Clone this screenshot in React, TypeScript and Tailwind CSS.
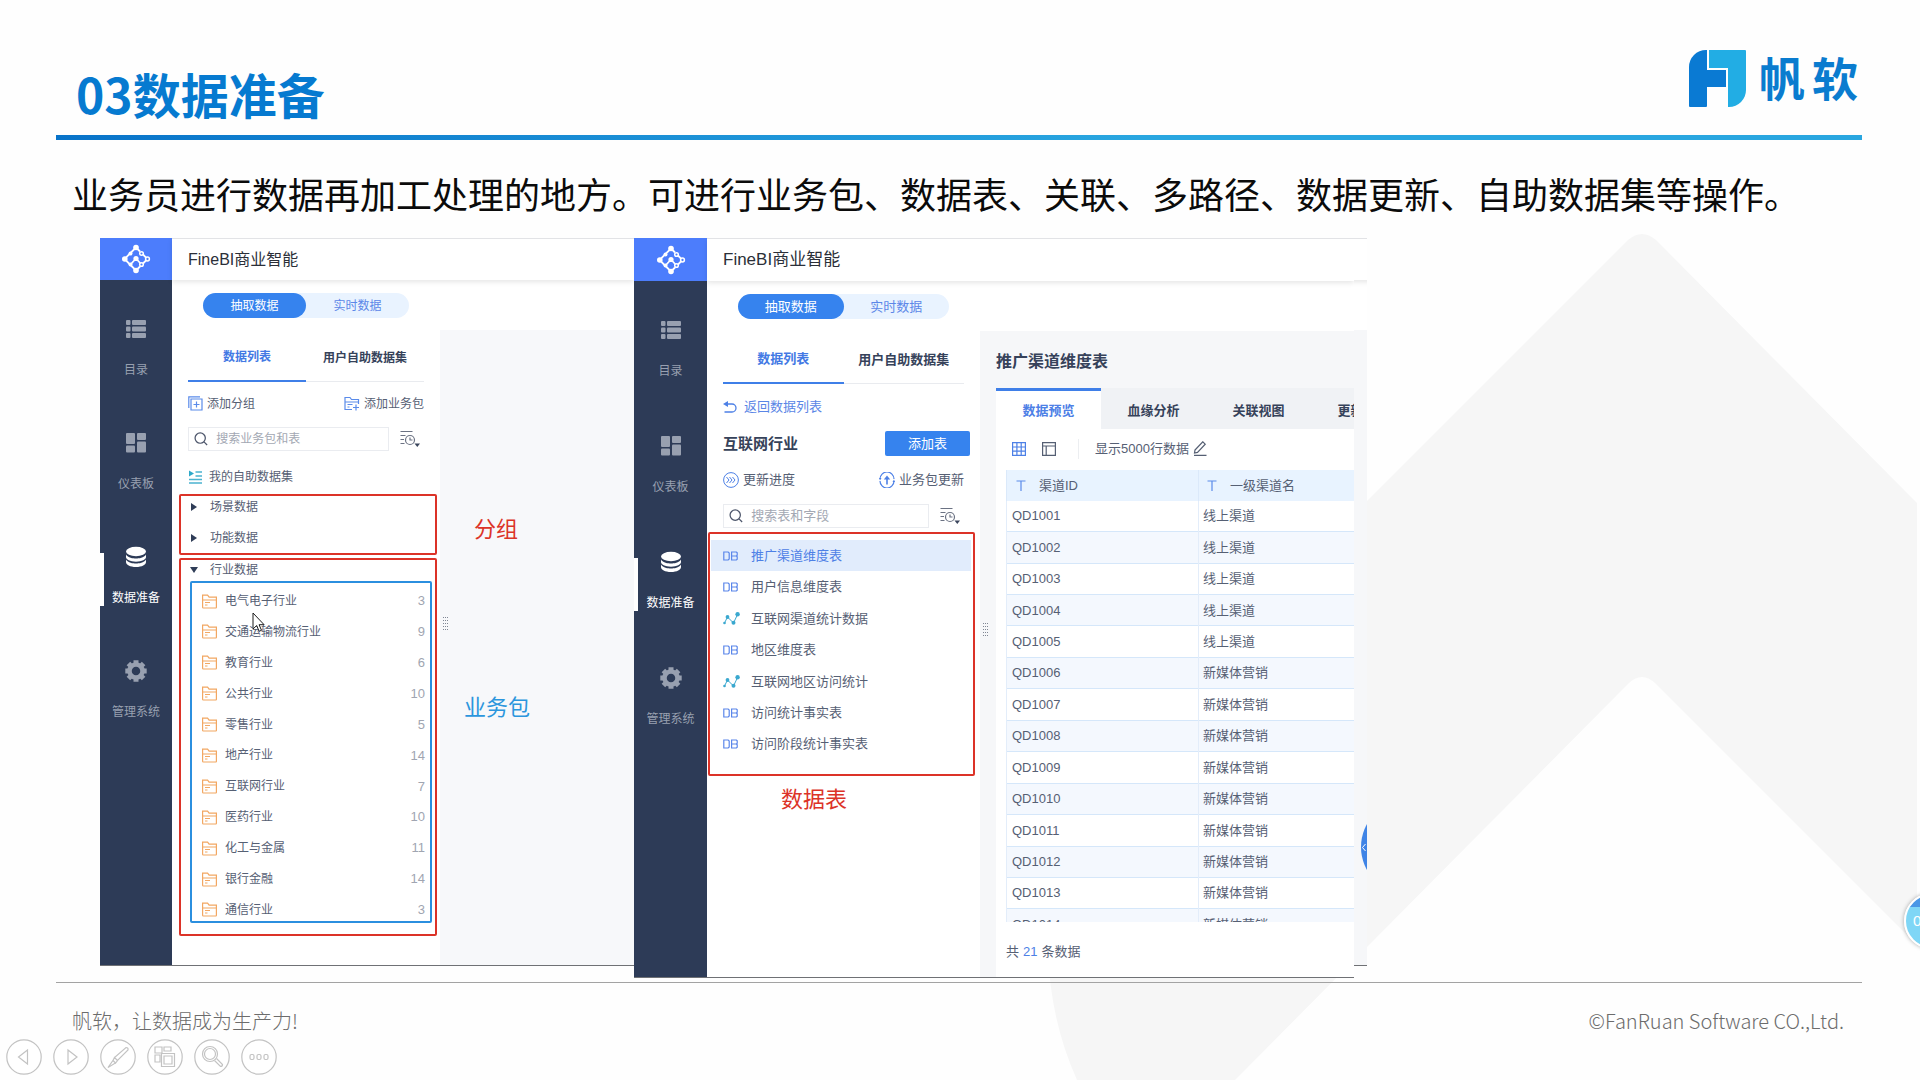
import React, { useState } from 'react';
import { clsx } from 'clsx';

const MENU = ['目录', '仪表板', '数据准备', '管理系统'];

const INDUSTRIES = [
  { name: '电气电子行业', count: 3 },
  { name: '交通运输物流行业', count: 9 },
  { name: '教育行业', count: 6 },
  { name: '公共行业', count: 10 },
  { name: '零售行业', count: 5 },
  { name: '地产行业', count: 14 },
  { name: '互联网行业', count: 7 },
  { name: '医药行业', count: 10 },
  { name: '化工与金属', count: 11 },
  { name: '银行金融', count: 14 },
  { name: '通信行业', count: 3 },
];

const TABLES = [
  { name: '推广渠道维度表', kind: 'db' },
  { name: '用户信息维度表', kind: 'db' },
  { name: '互联网渠道统计数据', kind: 'chart' },
  { name: '地区维度表', kind: 'db' },
  { name: '互联网地区访问统计', kind: 'chart' },
  { name: '访问统计事实表', kind: 'db' },
  { name: '访问阶段统计事实表', kind: 'db' },
];

const CHANNELS = Array.from({ length: 14 }, (_, i) => ({
  id: `QD${1001 + i}`,
  level: i < 5 ? '线上渠道' : '新媒体营销',
}));

const PREVIEW_TABS = ['数据预览', '血缘分析', '关联视图', '更新信息'];

/* ---------- icons ---------- */

const BrandMark = () => (
  <svg width="58" height="58" viewBox="0 0 58 58" aria-hidden="true">
    <path fill="#0a7ad3" d="M0 17A17 17 0 0 1 17 0h1v20h19v17H18v19a1 1 0 0 1-1 1H1a1 1 0 0 1-1-1z" />
    <path fill="#22ade4" d="M20 0h36a1 1 0 0 1 1 1v39a17 17 0 0 1-17 17h-1V18H20z" />
  </svg>
);

const FineLogo = () => (
  <svg width="30" height="30" viewBox="0 0 30 30" fill="none" stroke="#fff" strokeWidth="1.8" aria-hidden="true">
    <path d="M15 3.500 3.500 15 15 26.500M15 3.500l4 4M20.500 9l6 6-5.500 5.500M15 26.500l4-4M9.500 20.500l5.500-6 5 5.500" />
    <g fill="#fff" stroke="none">
      <circle cx="15" cy="3.500" r="2.800" />
      <circle cx="3.800" cy="15" r="2.800" />
      <circle cx="15" cy="26.500" r="2.800" />
      <circle cx="15" cy="14.500" r="2.600" />
      <circle cx="9.500" cy="9.500" r="2" />
      <circle cx="9.500" cy="20.500" r="2" />
    </g>
    <g fill="#4c7dfc" strokeWidth="1.500">
      <circle cx="20.500" cy="9.500" r="1.800" />
      <circle cx="26.500" cy="15" r="1.900" />
      <circle cx="20.500" cy="20.500" r="1.800" />
    </g>
  </svg>
);

const MenuIcon = ({ index }: { index: number }) => (
  <svg width="22" height="22" viewBox="0 0 22 22" fill="currentColor" aria-hidden="true">
    {index === 0 && (
      <g>
        <rect x="1" y="2" width="4.500" height="5" rx="1" />
        <rect x="7" y="2" width="14" height="5" rx="1" />
        <rect x="1" y="8.500" width="4.500" height="5" rx="1" />
        <rect x="7" y="8.500" width="14" height="5" rx="1" />
        <rect x="1" y="15" width="4.500" height="5" rx="1" />
        <rect x="7" y="15" width="14" height="5" rx="1" />
      </g>
    )}
    {index === 1 && (
      <g>
        <rect x="1" y="1" width="9" height="11" rx="1" />
        <rect x="12" y="1" width="9" height="7" rx="1" />
        <rect x="1" y="13.500" width="9" height="7" rx="1" />
        <rect x="12" y="9.500" width="9" height="11" rx="1" />
      </g>
    )}
    {index === 2 && (
      <g>
        <ellipse cx="11" cy="5.500" rx="10" ry="4.700" />
        <path d="M1 8.500c2 3.500 7 4 10 4s8-.5 10-4v2.500c0 2.500-4 4.700-10 4.700S1 13.500 1 11z" />
        <path d="M1 13.500c2 3.500 7 4 10 4s8-.5 10-4V16c0 2.800-4 5-10 5S1 18.800 1 16z" />
      </g>
    )}
    {index === 3 && (
      <g>
        <circle cx="11" cy="11" r="6.500" fill="none" stroke="currentColor" strokeWidth="4.500" />
        <path
          fill="none"
          stroke="currentColor"
          strokeWidth="5"
          d="M11 .3V3M11 19v2.700M.3 11H3M19 11h2.700M3.400 3.400l2 2M16.600 16.600l2 2M3.400 18.600l2-2M16.600 5.400l2-2"
        />
      </g>
    )}
  </svg>
);

const FolderIcon = () => (
  <svg width="15" height="15" viewBox="0 0 15 15" fill="none" stroke="#f2a762" strokeWidth="1.200" aria-hidden="true">
    <path d="M.6 13.200v-12h5l1.500 2h7.300v10a.8.8 0 0 1-.8.800H1.400a.8.800 0 0 1-.8-.8zM.6 6h13.800M3 8.500h5M3 11h2.500" />
  </svg>
);

const AddGroupIcon = () => (
  <svg width="15" height="15" viewBox="0 0 15 15" fill="none" stroke="#5a8bea" strokeWidth="1.200" aria-hidden="true">
    <path d="M.8 12V.8H12M3 3h11v11H3zM8.500 5.500v6M5.500 8.500h6" />
  </svg>
);

const AddPackIcon = () => (
  <svg width="16" height="15" viewBox="0 0 16 15" fill="none" stroke="#5a8bea" strokeWidth="1.200" aria-hidden="true">
    <path d="M8 13.500H1v-12h5l1.500 2h7V8M1 6h13M3.500 8.500h5M3.500 11h2M12 8.500v6M9 11.500h6" />
  </svg>
);

const SearchIcon = () => (
  <svg width="16" height="16" viewBox="0 0 16 16" fill="none" stroke="#4d566b" strokeWidth="1.400" aria-hidden="true">
    <circle cx="7" cy="7" r="5.800" />
    <path d="m11.300 11.300 3.500 3.500" />
  </svg>
);

const RecentIcon = () => (
  <svg width="21" height="18" viewBox="0 0 21 18" fill="none" stroke="#6b7283" strokeWidth="1.200" aria-hidden="true">
    <path d="M.5 1.500h12M.5 5.500h5M.5 9.500h3.500M.5 13.500h4" />
    <circle cx="10" cy="10" r="4.500" />
    <path d="M10 7.500V10h2.500" />
    <path d="M14.500 13.500h5.500L17.300 17z" fill="#3a455c" stroke="none" />
  </svg>
);

const SelfDataIcon = () => (
  <svg width="15" height="14" viewBox="0 0 15 14" fill="none" stroke="#4bb3cf" strokeWidth="1.300" aria-hidden="true">
    <path d="M7.500 2H14M7.500 6H14M1 9.500h13M1 13h13" />
    <path d="M1 .5 6 3.500 1 6.500z" fill="#2ea9c9" stroke="none" />
  </svg>
);

const Triangle = ({ open }: { open?: boolean }) => (
  <svg width="8" height="8" viewBox="0 0 8 8" fill="#2f3d57" aria-hidden="true">
    {open ? <path d="M0 1h8L4 7z" /> : <path d="M1 0v8l6-4z" />}
  </svg>
);

const DbIcon = () => (
  <svg width="15" height="10" viewBox="0 0 15 10" fill="none" stroke="#5a86ea" strokeWidth="1.200" aria-hidden="true">
    <path d="M.8 1h4.400l1 1v6l-1 1H.8zM8.600 5V1h4.800l.8.800v2.400l-.8.800h-4.800v4h4.800l.8-.8V5.800l-.8-.8" />
  </svg>
);

const ChartIcon = () => (
  <svg width="17" height="13" viewBox="0 0 17 13" fill="#3aa8cf" aria-hidden="true">
    <path d="m1.500 11 3-6 6 6 4-8.500" fill="none" stroke="#3aa8cf" />
    <circle cx="1.500" cy="11" r="1.300" />
    <circle cx="4.500" cy="5" r="1.900" />
    <circle cx="10.500" cy="10.800" r="2" />
    <circle cx="14.600" cy="2.300" r="2.200" />
  </svg>
);

const BackIcon = () => (
  <svg width="14" height="12" viewBox="0 0 14 12" fill="none" stroke="#4d80e6" strokeWidth="1.300" aria-hidden="true">
    <path d="M2 3h7a4 4 0 0 1 0 8H1.500" />
    <path d="M5 0v6L0 3z" fill="#4d80e6" stroke="none" />
  </svg>
);

const ProgressIcon = () => (
  <svg width="16" height="16" viewBox="0 0 16 16" fill="none" stroke="#4d80e6" aria-hidden="true">
    <circle cx="8" cy="8" r="7.400" />
    <path d="m3.500 5 2.500 3-2.500 3M6.500 5 9 8l-2.500 3M9.500 5 12 8l-2.500 3" />
  </svg>
);

const UpdateIcon = () => (
  <svg width="16" height="16" viewBox="0 0 16 16" fill="none" stroke="#4d80e6" aria-hidden="true">
    <path d="M1 7a7 7 0 0 1 14 0M15 9A7 7 0 0 1 1 9" strokeWidth="1.200" />
    <path d="M0 6h2.500L1 8.500zM16 10h-2.500L15 7.500z" fill="#4d80e6" stroke="none" />
    <path d="M8 12.500V6" strokeWidth="1.600" />
    <path d="m4.800 7.500 3.200-4 3.200 4z" fill="#4d80e6" stroke="none" />
  </svg>
);

const GridIcon = () => (
  <svg width="14" height="14" viewBox="0 0 14 14" fill="none" stroke="#4d80e6" strokeWidth="1.200" aria-hidden="true">
    <path d="M.6.6h12.800v12.800H.6zM.6 5h12.800M.6 9.200h12.800M4.900.6v12.800M9.200.6v12.800" />
  </svg>
);

const LayoutIcon = () => (
  <svg width="14" height="14" viewBox="0 0 14 14" fill="none" stroke="#555f73" strokeWidth="1.200" aria-hidden="true">
    <path d="M.6.6h12.800v12.800H.6zM.6 4h12.800M4.200 4v9.400" />
  </svg>
);

const PencilIcon = () => (
  <svg width="14" height="15" viewBox="0 0 14 15" fill="none" stroke="#555f73" strokeWidth="1.200" aria-hidden="true">
    <path d="m2 9 7.800-8.200 2.400 2.400-7.700 8.200-3 .6zM1 14.400h12.500" />
  </svg>
);

const TextTypeIcon = () => (
  <svg width="10" height="11" viewBox="0 0 10 11" fill="none" stroke="#5a8bea" strokeWidth="1.200" aria-hidden="true">
    <path d="M.5 1h9M5 1v10" />
  </svg>
);

const Grip = () => (
  <svg width="5" height="14" viewBox="0 0 5 14" fill="#7f8693" aria-hidden="true">
    {[0, 3, 6, 9, 12].map((y) => (
      <g key={y}>
        <rect x="0" y={y} width="1" height="1" />
        <rect x="2" y={y} width="1" height="1" />
        <rect x="4" y={y} width="1" height="1" />
      </g>
    ))}
  </svg>
);

const Backdrop = () => (
  <svg
    className="absolute inset-0 h-full w-full"
    viewBox="0 0 1920 1080"
    preserveAspectRatio="none"
    fill="#f6f6f6"
    aria-hidden="true"
  >
    <path d="M1628 240q14-12 28 0l261 263v442l-261-261q-14-14-28 0l-393 396h-158q-27-60-29-130V820z" />
  </svg>
);

/* ---------- shared parts ---------- */

const Sidebar = ({ wide }: { wide?: boolean }) => (
  <nav className={clsx('flex shrink-0 flex-col bg-[#2d3b57]', wide ? 'w-[73px]' : 'w-[72px]')}>
    <div className={clsx('flex items-center justify-center bg-[#4c7dfc]', wide ? 'h-[43px]' : 'h-[42px]')}>
      <FineLogo />
    </div>
    <ul className={clsx('flex flex-col pt-[38px]', wide ? 'gap-14' : 'gap-[54px]')}>
      {MENU.map((label, i) => (
        <li key={label} className="relative">
          {i === 2 && <span className="absolute top-[7px] left-0 h-[53px] w-1 bg-white" />}
          <button
            className={clsx(
              'flex w-full flex-col items-center gap-[22px] text-[12px] leading-4',
              i === 2 ? 'text-white' : 'text-[#98a0b0]'
            )}
          >
            <MenuIcon index={i} />
            {label}
          </button>
        </li>
      ))}
    </ul>
  </nav>
);

const TitleBar = ({ wide }: { wide?: boolean }) => (
  <header
    className={clsx(
      'z-10 flex shrink-0 items-center border-t border-[#e2e3e6] bg-white pl-4 text-[#2b2f38] shadow-[0_2px_5px_rgba(0,0,0,0.10)]',
      wide ? 'h-[43px] text-[17px]' : 'h-[42px] text-[16px]'
    )}
  >
    FineBI商业智能
  </header>
);

const ModeSwitch = () => {
  const [mode, setMode] = useState('抽取数据');
  return (
    <div className="mx-[31px] mt-[13px] flex h-[25px] shrink-0 rounded-full bg-[#e9f3ff]">
      {['抽取数据', '实时数据'].map((m) => (
        <button
          key={m}
          onClick={() => setMode(m)}
          className={clsx('flex-1 rounded-full', m === mode ? 'bg-[#3683ee] text-white' : 'text-[#5c87e8]')}
        >
          {m}
        </button>
      ))}
    </div>
  );
};

const ListTabs = ({ wide }: { wide?: boolean }) => (
  <div className={clsx('mx-4 flex h-[50px] shrink-0 font-bold', wide ? 'mt-[15px]' : 'mt-[14px]')}>
    <button className="flex-1 border-b-2 border-[#3f7fe8] pt-[2px] text-[#4379e4]">数据列表</button>
    <button className="flex-1 border-b border-[#e9ebef] pt-[2px] text-[#36425a]">用户自助数据集</button>
  </div>
);

const SearchRow = ({ placeholder }: { placeholder: string }) => (
  <div className="mx-4 flex h-6 shrink-0 items-center gap-[11px]">
    <label className="flex h-6 min-w-0 flex-1 items-center gap-2 border border-[#eaecf0] pl-[5px]">
      <SearchIcon />
      <input
        type="text"
        aria-label={placeholder}
        placeholder={placeholder}
        className="w-full min-w-0 outline-none placeholder:text-[#a3a8b3]"
      />
    </label>
    <button aria-label="最近使用" className="mr-[3px]">
      <RecentIcon />
    </button>
  </div>
);

/* ---------- left screen ---------- */

const PackagePanel = () => (
  <div className="flex h-[728px] min-w-0 flex-[534] overflow-hidden border-b border-[#6f7175] bg-white text-[12px] text-[#566074]">
    <Sidebar />
    <div className="flex min-w-0 flex-1 flex-col">
      <TitleBar />
      <div className="flex min-h-0 flex-1">
        <section className="flex w-[268px] shrink-0 flex-col">
          <ModeSwitch />
          <ListTabs />
          <div className="mx-4 flex h-[45px] shrink-0 items-center justify-between pb-[2px]">
            <button className="flex items-center gap-1">
              <AddGroupIcon />
              添加分组
            </button>
            <button className="flex items-center gap-1">
              <AddPackIcon />
              添加业务包
            </button>
          </div>
          <SearchRow placeholder="搜索业务包和表" />
          <a href="#self" className="mx-4 mt-2 flex h-[35px] shrink-0 items-center gap-[6px]">
            <SelfDataIcon />
            我的自助数据集
          </a>

          <div className="mr-[3px] ml-[7px] flex h-[61px] shrink-0 flex-col gap-[9px] rounded-[2px] border-2 border-[#dc3328]">
            {['场景数据', '功能数据'].map((g) => (
              <button key={g} className="flex h-[22px] items-center gap-3 pl-[9px]">
                <Triangle />
                {g}
              </button>
            ))}
          </div>

          <div className="mt-[3px] mr-[3px] ml-[7px] flex shrink-0 flex-col rounded-[2px] border-2 border-[#dc3328] pb-[11px]">
            <button className="mb-[2px] flex h-[19px] items-center gap-3 pl-[9px]">
              <Triangle open />
              行业数据
            </button>
            <ul className="relative mr-[3px] ml-[9px] flex h-[342px] flex-col justify-between rounded-[2px] border-2 border-[#2b8fdf] pt-[7px]">
              {INDUSTRIES.map((item) => (
                <li key={item.name} className="flex h-[22px] items-center gap-2 pr-[5px] pl-[10px]">
                  <FolderIcon />
                  <span className="flex-1">{item.name}</span>
                  <span className="text-[13px] text-[#a0a5b1]">{item.count}</span>
                </li>
              ))}
              <svg
                className="absolute top-[29px] left-[60px]"
                width="14"
                height="21"
                viewBox="0 0 14 21"
                fill="#fff"
                stroke="#1c1c1c"
                aria-hidden="true"
              >
                <path d="M1 1v16l3.700-3.500 2.400 5.800 2.400-1-2.400-5.600h5z" />
              </svg>
            </ul>
          </div>
        </section>

        <div className="mt-[50px] flex min-w-0 flex-1 bg-[#f7f8fa]">
          <div className="pt-[287px] pl-[3px]">
            <Grip />
          </div>
          <div className="flex flex-col gap-[146px] pt-[184px] pl-4 text-[22px] leading-8">
            <span className="pl-[10px] text-[#dc3328]">分组</span>
            <span className="text-[#2b96dd]">业务包</span>
          </div>
        </div>
      </div>
    </div>
  </div>
);

/* ---------- right screen ---------- */

const TablePanel = () => {
  const [selected, setSelected] = useState('推广渠道维度表');

  return (
    <div className="flex h-[740px] min-w-0 flex-[720] overflow-hidden border-b border-[#6f7175] bg-white text-[13px] text-[#566074]">
      <Sidebar wide />
      <div className="flex min-w-0 flex-1 flex-col">
        <TitleBar wide />
        <div className="flex min-h-0 flex-1">
          <section className="flex w-[273px] shrink-0 flex-col">
            <ModeSwitch />
            <ListTabs wide />
            <a href="#back" className="mx-4 flex h-[47px] shrink-0 items-center gap-[7px] pb-[2px] text-[#5a86e6]">
              <BackIcon />
              返回数据列表
            </a>
            <div className="mr-[10px] ml-4 flex h-[25px] shrink-0 items-center justify-between">
              <h2 className="pt-[2px] text-[15px] font-bold text-[#36425a]">互联网行业</h2>
              <button className="h-[25px] w-[85px] rounded-[2px] bg-[#3683ee] text-white">添加表</button>
            </div>
            <div className="mx-4 flex h-[48px] shrink-0 items-center justify-between">
              <button className="flex items-center gap-1">
                <ProgressIcon />
                更新进度
              </button>
              <button className="flex items-center gap-1">
                <UpdateIcon />
                业务包更新
              </button>
            </div>
            <SearchRow placeholder="搜索表和字段" />

            <div className="mt-1 mr-[5px] ml-[1px] h-[244px] shrink-0 rounded-[2px] border-2 border-[#dc3328] pt-[6px]">
              <ul className="flex h-[220px] flex-col pr-[2px] pl-[1px]">
                {TABLES.map((t) => (
                  <li key={t.name} className="flex flex-1">
                    <button
                      onClick={() => setSelected(t.name)}
                      className={clsx(
                        'flex flex-1 items-center pl-3 text-left',
                        t.name === selected && 'bg-[#e1ecfc] text-[#4d80e6]'
                      )}
                    >
                      <span className="w-7">{t.kind === 'db' ? <DbIcon /> : <ChartIcon />}</span>
                      {t.name}
                    </button>
                  </li>
                ))}
              </ul>
            </div>
            <p className="mt-2 pl-[74px] text-[22px] leading-8 text-[#dc3328]">数据表</p>
          </section>

          <div className="mt-[50px] flex min-w-0 flex-1 bg-[#f6f7f9]">
            <div className="w-4 shrink-0 pt-[292px] pl-[3px]">
              <Grip />
            </div>
            <section className="flex min-w-0 flex-1 flex-col">
              <h2 className="flex h-[57px] shrink-0 items-center pt-1 text-[16px] font-bold text-[#36425a]">
                推广渠道维度表
              </h2>
              <div className="flex h-[41px] shrink-0 overflow-hidden bg-[#f0f2f5] font-bold text-[#36425a]">
                {PREVIEW_TABS.map((tab, i) => (
                  <button
                    key={tab}
                    className={clsx(
                      'w-[105px] shrink-0 border-t-3 pt-[2px]',
                      i === 0 ? 'border-[#3f7fe8] bg-white text-[#4d80e6]' : 'border-transparent'
                    )}
                  >
                    {tab}
                  </button>
                ))}
              </div>
              <div className="flex h-[41px] shrink-0 items-center bg-white pb-[2px] pl-4">
                <button aria-label="表格" className="mr-4">
                  <GridIcon />
                </button>
                <button aria-label="结构" className="mr-[22px]">
                  <LayoutIcon />
                </button>
                <span className="mr-4 h-5 w-px bg-[#eceef1]" />
                <span className="mr-1">显示5000行数据</span>
                <button aria-label="编辑">
                  <PencilIcon />
                </button>
              </div>
              <div className="h-[452px] shrink-0 overflow-hidden bg-white pl-[10px]">
                <table className="h-[471px] w-full table-fixed border-collapse text-left">
                  <thead>
                    <tr className="h-[31px] bg-[#e8f3ff]">
                      <th className="w-[192px] border-x border-[#dbe9fa] p-0 pl-[9px] font-normal">
                        <span className="flex items-center gap-[13px]">
                          <TextTypeIcon />
                          渠道ID
                        </span>
                      </th>
                      <th className="p-0 pl-2 font-normal">
                        <span className="flex items-center gap-[13px]">
                          <TextTypeIcon />
                          一级渠道名
                        </span>
                      </th>
                    </tr>
                  </thead>
                  <tbody>
                    {CHANNELS.map((c) => (
                      <tr key={c.id} className="border-b border-[#d5e7fa] even:bg-[#f4f8fe]">
                        <td className="border-x border-[#e3edfa] p-0 pl-[5px]">{c.id}</td>
                        <td className="p-0 pl-1">{c.level}</td>
                      </tr>
                    ))}
                  </tbody>
                </table>
              </div>
              <div className="flex flex-1 items-center gap-1 bg-white pt-[4px] pl-[10px]">
                共 <span className="text-[#4d80e6]">21</span> 条数据
              </div>
            </section>
          </div>
        </div>
      </div>
    </div>
  );
};

const ScreenEdge = () => (
  <div className="flex h-[728px] w-[13px] shrink-0 flex-col overflow-hidden border-b border-[#6f7175] bg-white">
    <div className="z-10 -mx-2 h-[42px] shrink-0 border-t border-[#e2e3e6] bg-white shadow-[0_2px_5px_rgba(0,0,0,0.10)]" />
    <div className="relative mt-[50px] flex-1 overflow-hidden bg-[#f6f7f9]">
      <svg className="absolute top-[484px] left-[7px]" width="60" height="66" viewBox="0 0 60 66" aria-hidden="true">
        <circle cx="47" cy="33" r="47" fill="#3f84e6" />
        <path d="m4.500 30-3 3.500 3 3.500" fill="none" stroke="#fff" />
      </svg>
    </div>
  </div>
);

/* ---------- slide controls ---------- */

const CONTROLS = [
  { label: '上一页', icon: <path d="M21.500 11v14l-9-7z" /> },
  { label: '下一页', icon: <path d="M15 11v14l9-7z" /> },
  {
    label: '画笔',
    icon: <path d="M26 8.500q2.500 0 2 2.500L17.500 21.500l-3-3zM14.500 18.500l3 3-2 2.500-2.500-2.500zM13 21.500l2.500 2.500L8 28.500z" />,
  },
  {
    label: '全部幻灯片',
    icon: <path d="M8 8h7v6H8zM17 8h7v4h-7zM8 16h5v7H8zM14.500 14.500h13v13h-13zM17 17h8v8h-8z" />,
  },
  {
    label: '缩放',
    icon: (
      <g>
        <circle cx="16" cy="15" r="7.500" />
        <circle cx="16" cy="15" r="5.500" />
        <path d="m20.500 21.500 6 6q2 0 2-2l-6-6" />
      </g>
    ),
  },
  {
    label: '更多',
    icon: (
      <g>
        <rect x="9" y="15.500" width="4" height="5" rx="1.500" />
        <rect x="16" y="15.500" width="4" height="5" rx="1.500" />
        <rect x="23" y="15.500" width="4" height="5" rx="1.500" />
      </g>
    ),
  },
];

const App: React.FC = () => {
  return (
    <div className="relative min-h-screen overflow-hidden bg-[#fefefe] font-['Liberation_Sans','Noto_Sans_CJK_SC',sans-serif]">
      <Backdrop />

      <div className="relative">
        {/* Slide title */}
        <header className="mr-[58px] ml-14 flex h-[140px] items-end justify-between border-b-[5px] border-[#1b8bd6] pr-1 pl-5 font-['Noto_Sans_CJK_SC',sans-serif] [border-image:linear-gradient(90deg,#0873c9,#29a6e0_60%)_1]">
          <h1 className="pb-3 text-[48px] leading-[60px] font-bold text-[#067ad0]">03数据准备</h1>
          <div className="flex items-start gap-3 pb-[27px]">
            <BrandMark />
            <div className="flex h-[58px] gap-[7px] text-[46px] leading-[52px] font-bold text-[#0a7ccf]">
              <span>帆</span>
              <span>软</span>
            </div>
          </div>
        </header>

        <p className="mt-[26px] ml-[72px] h-[72px] font-['Noto_Sans_CJK_SC',sans-serif] text-[36px] leading-[54px] whitespace-nowrap text-[#0b0b0b]">
          业务员进行数据再加工处理的地方。可进行业务包、数据表、关联、多路径、数据更新、自助数据集等操作。
        </p>

        {/* Product screens */}
        <main className="mr-[553px] ml-[100px] flex items-start">
          <PackagePanel />
          <TablePanel />
          <ScreenEdge />
        </main>

        <footer className="mr-[58px] ml-14 mt-1 flex justify-between border-t border-[#a3a3a3] pt-6 pr-[18px] pl-4 font-['Noto_Sans_CJK_SC',sans-serif] text-[20px] leading-7 font-light text-[#6c6c6c]">
          <span>帆软，让数据成为生产力!</span>
          <span>©FanRuan Software CO.,Ltd.</span>
        </footer>

        <div className="mt-1 ml-[6px] flex gap-[11px]">
          {CONTROLS.map((c) => (
            <button key={c.label} aria-label={c.label}>
              <svg width="36" height="36" viewBox="0 0 36 36" fill="none" stroke="#c3c3c3" strokeWidth="1.200">
                <circle cx="18" cy="18" r="17.200" fill="#fff" />
                {c.icon}
              </svg>
            </button>
          ))}
        </div>
      </div>

      {/* Floating timer */}
      <button className="absolute right-[-40px] bottom-[131px] flex h-14 w-14 items-center overflow-hidden rounded-full border-2 border-white bg-linear-to-b from-[#4a97e6] from-24% to-[#7fd6f6] to-24% pl-[7px] text-[15px] text-white shadow-[0_0_4px_rgba(0,0,0,0.35)]">
        0
      </button>
    </div>
  );
};

export default App;
